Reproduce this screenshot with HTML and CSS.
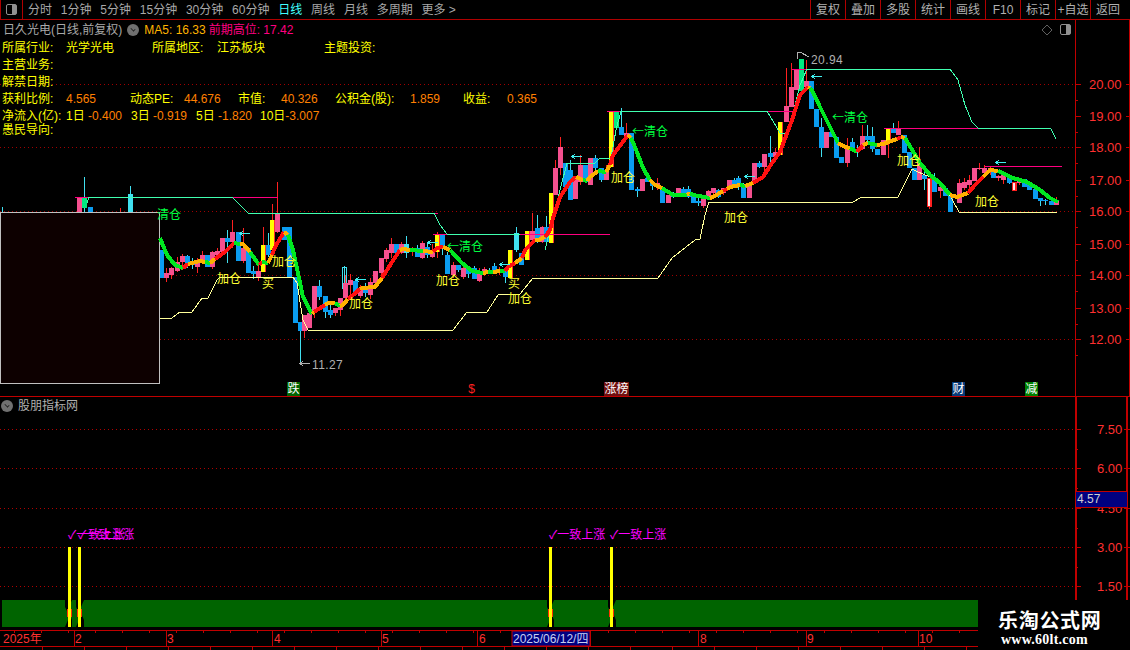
FILE: index.html
```html
<!DOCTYPE html>
<html lang="zh-CN">
<head>
<meta charset="utf-8">
<title>日久光电</title>
<link rel="stylesheet" href="styles.css">
</head>
<body>
<div class="app">
  <header class="topbar">
    <div class="corner"><span class="panel-icon"></span></div>
    <nav class="tabs">
      <span>分时</span><span>1分钟</span><span>5分钟</span><span>15分钟</span><span>30分钟</span><span>60分钟</span>
      <span class="active">日线</span><span>周线</span><span>月线</span><span>多周期</span><span>更多 &gt;</span>
    </nav>
    <div class="tools">
      <span>复权</span><span>叠加</span><span>多股</span><span>统计</span><span>画线</span><span>F10</span><span>标记</span><span>+自选</span><span>返回</span>
    </div>
  </header>

  <section class="main-pane">
    <svg class="chart main-chart" viewBox="0 20 1130 376" width="1130" height="376">
      <g id="grid-main"></g>
      <g id="candles"></g>
      <g id="lines"></g>
      <rect class="blackbox" x="0.5" y="212.5" width="159" height="171"/>
      <g id="ma"></g>
      <g id="arrows"></g>
      <text class="lbl y" x="217" y="283">加仓</text>
      <text class="lbl y" x="272" y="266">加仓</text>
      <text class="lbl y" x="349" y="308">加仓</text>
      <text class="lbl y" x="436" y="285">加仓</text>
      <text class="lbl y" x="508" y="303">加仓</text>
      <text class="lbl y" x="611" y="182">加仓</text>
      <text class="lbl y" x="724" y="222">加仓</text>
      <text class="lbl y" x="897" y="165">加仓</text>
      <text class="lbl y" x="975" y="206">加仓</text>
      <text class="lbl y" x="262" y="288">买</text>
      <text class="lbl y" x="508" y="288">买</text>
      <text class="lbl g" x="157" y="219">清仓</text>
      <text class="lbl g" x="447" y="251">←清仓</text>
      <text class="lbl g" x="632" y="136">←清仓</text>
      <text class="lbl g" x="832" y="122">←清仓</text>
      <text class="hi" x="811" y="64">20.94</text>
      <text class="hi" x="312" y="369">11.27</text>
      <g id="axis-main"></g>
      <path class="diamond" d="M1047 25l5 5-5 5-5-5z"/>
    </svg>
    <span class="panel-icon chart-btn"></span>

    <div class="head">
      <span class="name">日久光电(日线,前复权)</span>
      <span class="round-btn"></span>
      <span class="ma5">MA5: 16.33</span>
      <span class="prev">前期高位: 17.42</span>
    </div>

    <div class="info">
      <div class="row r1"><span>所属行业:</span><span>光学光电</span><span>所属地区:</span><span>江苏板块</span><span>主题投资:</span></div>
      <div class="row">主营业务:</div>
      <div class="row">解禁日期:</div>
      <div class="row r4"><span>获利比例:</span><b>4.565</b><span>动态PE:</span><b>44.676</b><span>市值:</span><b>40.326</b><span>公积金(股):</span><b>1.859</b><span>收益:</span><b>0.365</b></div>
      <div class="row r5"><span>净流入(亿):</span><span>1日 <b>-0.400</b></span><span>3日 <b>-0.919</b></span><span>5日 <b>-1.820</b></span><span>10日<b>-3.007</b></span></div>
      <div class="row">愚民导向:</div>
    </div>

    <span class="badge b-down">跌</span>
    <span class="badge b-dollar">$</span>
    <span class="badge b-rank">涨榜</span>
    <span class="badge b-fin">财</span>
    <span class="badge b-cut">减</span>
  </section>

  <section class="sub-pane">
    <svg class="chart" viewBox="0 397 1130 233" width="1130" height="233">
      <g id="grid-sub"></g>
      <g id="vol"></g>
      <text class="sig" x="68" y="539">✓一致上涨</text>
      <text class="sig" x="78" y="539">✓一致上涨</text>
      <text class="sig" x="549" y="539">✓一致上涨</text>
      <text class="sig" x="610" y="539">✓一致上涨</text>
      <g id="axis-sub"></g>
    </svg>
    <div class="sub-title"><span class="round-btn"></span><span>股朋指标网</span></div>
    <div class="value-tag">4.57</div>
  </section>

  <footer class="datebar">
    <svg class="chart" viewBox="0 630 978 20" width="978" height="20">
      <g id="dates"></g>
      <text class="ax" x="3" y="643">2025年</text>
      <text class="ax" x="75" y="643">2</text>
      <text class="ax" x="167" y="643">3</text>
      <text class="ax" x="274" y="643">4</text>
      <text class="ax" x="382" y="643">5</text>
      <text class="ax" x="479" y="643">6</text>
      <text class="ax" x="700" y="643">8</text>
      <text class="ax" x="807" y="643">9</text>
      <text class="ax" x="919" y="643">10</text>
      <rect class="datebox" x="512" y="631" width="78" height="15"/>
      <text class="datetxt" x="513" y="643">2025/06/12/四</text>
    </svg>
    <div class="watermark"><strong>乐淘公式网</strong><em>www.60lt.com</em></div>
  </footer>
</div>
<script src="chart.js"></script>
</body>
</html>
```
FILE: styles.css
```css
* { box-sizing: border-box; }
html, body { margin: 0; height: 100%; background: #000; }
body { overflow: hidden; font: 12px/14px "Liberation Sans", "Noto Sans CJK SC", sans-serif; color: #c0c0c0; }
.app { width: 1130px; height: 650px; display: flex; flex-direction: column; }

.topbar { height: 20px; display: flex; align-items: stretch; border-bottom: 1px solid #b00000; flex: none; }
.corner { width: 23px; border: 1px solid #b00000; border-width: 0 1px; display: flex; align-items: center; justify-content: center; }
.panel-icon { display: block; width: 11px; height: 11px; border: 1px solid #909090; border-radius: 2px; background: linear-gradient(90deg, #000 55%, #909090 55%); }
.tabs { display: flex; gap: 8.8px; padding-left: 5px; align-items: center; flex: 1; color: #a8a8a8; font-size: 12px; }
.tabs .active { color: #40ffff; }
.tools { display: flex; color: #b0b0b0; margin-right: 5px; }
.tools span { width: 35px; border-left: 1px solid #b00000; display: flex; align-items: center; justify-content: center; }

.main-pane { position: relative; height: 377px; border-bottom: 1px solid #c00000; flex: none; }
.sub-pane { position: relative; height: 233px; flex: none; }
.chart { display: block; }

.head { position: absolute; left: 3px; top: 2px; display: flex; align-items: center; gap: 5px; height: 15px; }
.name { color: #a8a8a8; }
.round-btn { display: block; width: 12px; height: 12px; border-radius: 50%; background: #707070; position: relative; }
.round-btn::after { content: ""; position: absolute; left: 3px; top: 3px; width: 5px; height: 3px; border: solid #111; border-width: 0 1px 1px 0; transform: rotate(45deg) scale(.7); }
.ma5 { color: #ffb400; }
.prev { color: #ff0080; margin-left: -2px; }
.chart-btn { position: absolute; left: 1060px; top: 4px; }

.info { position: absolute; left: 2px; top: 21px; color: #ffff00; }
.row { height: 17px; line-height: 15px; white-space: nowrap; display: flex; }
.row:nth-child(n+5) { height: 14px; }
.row b { font-weight: 400; color: #ff8000; }
.r1 span:nth-child(1) { width: 64px; }
.r1 span:nth-child(2) { width: 86px; }
.r1 span:nth-child(3) { width: 65px; }
.r1 span:nth-child(4) { width: 107px; }
.r4 > :nth-child(1) { width: 64px; }
.r4 > :nth-child(2) { width: 64px; }
.r4 > :nth-child(3) { width: 54px; }
.r4 > :nth-child(4) { width: 54px; }
.r4 > :nth-child(5) { width: 43px; }
.r4 > :nth-child(6) { width: 54px; }
.r4 > :nth-child(7) { width: 75px; }
.r4 > :nth-child(8) { width: 53px; }
.r4 > :nth-child(9) { width: 44px; }
.r5 > :nth-child(1) { width: 64px; }
.r5 > :nth-child(2) { width: 65px; }
.r5 > :nth-child(3) { width: 65px; }
.r5 > :nth-child(4) { width: 64px; }

.badge { position: absolute; top: 362px; height: 14px; line-height: 14px; text-align: center; color: #fff; font-size: 12px; }
.b-down { left: 287px; width: 13px; background: #006400; }
.b-dollar { left: 465px; width: 13px; color: #ff2020; }
.b-rank { left: 604px; width: 25px; background: #701010; }
.b-fin { left: 952px; width: 13px; background: #063a78; }
.b-cut { left: 1025px; width: 13px; background: #008000; }

.sub-title { position: absolute; left: 1px; top: 1px; display: flex; align-items: center; gap: 5px; color: #b0b0b0; height: 15px; }
.value-tag { position: absolute; left: 1076px; top: 94px; width: 51px; height: 17px; background: #000080; border: solid #c00000; border-width: 1px 0; color: #d0d0d0; line-height: 14px; font-size: 12px; padding-left: 1px; }

.datebar { position: relative; flex: none; height: 20px; }
.watermark { position: absolute; left: 978px; top: -30px; width: 152px; height: 50px; background: #000; color: #fff; display: flex; flex-direction: column; align-items: flex-start; padding-top: 8px; }
.watermark strong { font: 700 20px/24px "Noto Sans CJK SC", sans-serif; letter-spacing: .7px; margin-left: 20px; height: 24px; }
.watermark em { font: 700 14px/15px "Liberation Serif", serif; margin-left: 23px; letter-spacing: .25px; font-style: normal; }

.lbl { font: 12px "Noto Sans CJK SC", sans-serif; }
.lbl.y { fill: #ffff33; }
.lbl.g { fill: #00ff40; }
.hi { font: 12px "Liberation Sans", sans-serif; fill: #b0b0b0; letter-spacing: .4px; }
.sig { font: 12px "Noto Sans CJK SC", "DejaVu Sans", sans-serif; fill: #ff00ff; }
.ax { font: 12px "Liberation Sans", "Noto Sans CJK SC", sans-serif; fill: #ff3030; }
.axv { font: 13px "Liberation Sans", sans-serif; fill: #ff3030; }
.datebox { fill: #000080; stroke: #c00000; stroke-width: 1; }
.datetxt { font: 12px "Liberation Sans", "Noto Sans CJK SC", sans-serif; fill: #c8d0f0; }
.blackbox { fill: #0d0000; stroke: #c0c0c0; stroke-width: 1; }
.diamond { fill: none; stroke: #606060; }
```
FILE: chart.js
```js
const NS = 'http://www.w3.org/2000/svg';
function el(parent, name, attrs) {
  const n = document.createElementNS(NS, name);
  for (const k in attrs) n.setAttribute(k, attrs[k]);
  document.getElementById(parent).appendChild(n);
  return n;
}
const RED = '#c00000';
function rect(g, x, y, w, h, fill) { el(g, 'rect', { x, y, width: w, height: h, fill, 'shape-rendering': 'crispEdges' }); }
function line(g, x1, y1, x2, y2, stroke, extra) {
  el(g, 'line', Object.assign({ x1, y1, x2, y2, stroke, 'shape-rendering': 'crispEdges' }, extra || {}));
}
function poly(g, pts, stroke, w) {
  el(g, 'polyline', { points: pts.map(p => p.join(',')).join(' '), fill: 'none', stroke, 'stroke-width': w || 1, 'stroke-linejoin': 'round', 'shape-rendering': 'crispEdges' });
}

/* grid and axes */
[84, 147, 211, 275, 339].forEach(y => line('grid-main', 0, y + .5, 1075, y + .5, '#a00000', { 'stroke-dasharray': '1 3' }));
[429, 468, 508, 547, 586].forEach(y => line('grid-sub', 0, y + .5, 1075, y + .5, '#b00000', { 'stroke-dasharray': '1 3' }));
line('axis-main', 1075.5, 20, 1075.5, 396, RED);
line('axis-main', 1129.5, 20, 1129.5, 396, RED);
[[20, 84], [19, 116], [18, 147], [17, 180], [16, 211], [15, 244], [14, 275], [13, 308], [12, 339]].forEach(([v, y]) => {
  el('axis-main', 'text', { class: 'axv', x: 1089, y: y + 5 }).textContent = v.toFixed(2);
  line('axis-main', 1075, y + .5, 1081, y + .5, RED);
  line('axis-main', 1075, y + 16.5, 1078, y + 16.5, RED);
  line('axis-main', 1126, y + .5, 1130, y + .5, RED);
});
rect('axis-sub', 1075, 397, 2, 203, RED);
rect('axis-sub', 1126, 397, 2, 203, RED);
[['7.50', 429], ['6.00', 468], ['4.50', 508], ['3.00', 547], ['1.50', 586]].forEach(([v, y]) => {
  el('axis-sub', 'text', { class: 'axv', x: 1097, y: y + 5 }).textContent = v;
  line('axis-sub', 1075, y + .5, 1081, y + .5, RED);
  line('axis-sub', 1075, y + 20.5, 1078, y + 20.5, RED);
  line('axis-sub', 1124, y + .5, 1130, y + .5, RED);
});

/* candles: x, body top, body bottom, wick top, wick bottom, kind */
const K = {
  p: ['#f5508f', '#ff2020'], b: ['#0a9cf0', '#40e0f0'], y: ['#ffff00', '#ff2020'],
  g: ['#00e880', '#40e0f0'], c: ['#40e0f0', '#40e0f0'], h: ['#ff2020', '#ff2020'], o: ['#000', '#40e0f0'], r: ['#ff2020', '#ff2020']
};
const C = [
  [2,212,212,207,212,'c'],[79,197,212,197,212,'p'],[84,197,208,177,212,'g'],[90,207,212,207,212,'b'],[120,212,212,208,212,'r'],[130,194,212,186,212,'c'],
  [161,250,278,250,278,'b'],[166,273,278,268,282,'p'],[171,268,275,267,279,'p'],[177,262,271,257,272,'p'],[182,256,262,254,270,'p'],[187,256,263,255,268,'b'],
  [192,262,265,258,269,'b'],[197,262,267,258,273,'p'],[202,255,262,251,262,'p'],[207,255,267,255,267,'b'],[212,252,267,251,269,'p'],[217,251,255,248,257,'p'],
  [222,238,252,238,252,'p'],[227,238,242,230,263,'b'],[232,232,242,220,248,'p'],[238,232,261,232,261,'b'],[243,248,261,228,263,'p'],[248,248,273,248,273,'b'],
  [253,271,274,266,279,'b'],[258,271,277,263,281,'p'],[263,245,272,227,272,'y'],[268,245,255,233,257,'b'],[272,220,250,204,250,'y'],[277,213,232,182,233,'p'],
  [284,227,240,227,240,'b'],[289,227,277,227,277,'b'],[295,277,323,277,323,'b'],[300,322,331,322,362,'b'],[304,315,331,315,338,'p'],[309,313,328,308,328,'p'],
  [314,286,312,286,318,'p'],[319,286,297,280,300,'b'],[325,296,312,296,318,'b'],[330,310,315,305,318,'b'],[335,308,313,308,316,'p'],[340,298,310,298,316,'p'],
  [344,267,288,266,290,'o'],[345,283,298,275,300,'p'],[350,280,285,274,295,'p'],[355,281,293,280,296,'b'],[360,289,296,285,298,'p'],[365,288,293,283,297,'b'],
  [370,282,295,278,299,'p'],[375,271,283,271,287,'p'],[381,258,273,258,275,'p'],[386,250,259,248,262,'p'],[391,244,253,238,258,'p'],[396,244,253,244,258,'b'],
  [401,244,253,242,254,'p'],[406,244,253,236,258,'c'],[412,248,252,247,256,'p'],[417,248,257,245,257,'b'],[422,243,258,241,259,'p'],[427,247,255,243,258,'b'],
  [432,250,257,244,258,'p'],[437,235,252,232,258,'y'],[442,235,248,235,255,'b'],[447,255,274,252,274,'b'],[453,265,275,262,278,'p'],[458,265,270,265,272,'b'],
  [463,268,277,266,279,'p'],[468,269,274,266,278,'b'],[474,268,279,266,279,'b'],[479,273,281,268,282,'p'],[484,269,274,267,276,'p'],[489,270,273,268,274,'b'],
  [494,266,271,263,273,'b'],[499,269,273,267,275,'p'],[505,270,277,270,283,'b'],[510,250,278,250,278,'y'],[516,233,250,227,252,'c'],[521,253,265,253,265,'b'],
  [527,231,260,232,260,'y'],[532,231,240,213,241,'p'],[537,228,242,215,243,'b'],[542,227,242,226,243,'p'],[546,227,242,216,243,'b'],[551,193,243,193,243,'y'],
  [555,168,195,160,195,'p'],[560,147,168,137,175,'p'],[565,163,187,163,190,'b'],[570,170,200,160,200,'b'],[575,177,199,177,199,'p'],[580,165,182,155,185,'p'],
  [585,165,182,165,182,'b'],[590,158,185,158,185,'p'],[595,158,168,155,175,'b'],[601,168,180,168,182,'b'],[606,170,180,165,180,'p'],[611,111,167,111,167,'y'],
  [616,111,128,111,128,'g'],[621,127,135,108,135,'b'],[626,133,138,123,140,'p'],[631,133,190,133,190,'b'],[637,189,191,187,197,'b'],[642,179,191,179,191,'p'],
  [647,178,182,176,182,'b'],[652,182,186,180,190,'b'],[657,183,187,178,190,'p'],[662,187,203,187,203,'b'],[668,195,203,195,203,'p'],[673,194,197,192,198,'b'],
  [678,188,197,188,197,'p'],[683,189,193,187,193,'b'],[688,189,197,186,198,'b'],[693,193,203,193,203,'b'],[698,201,203,198,206,'b'],[703,197,206,197,208,'p'],
  [708,191,198,190,199,'p'],[713,188,193,188,196,'p'],[718,190,197,189,198,'b'],[723,188,193,188,195,'p'],[729,180,187,180,188,'p'],[734,180,188,178,188,'b'],
  [738,178,185,176,190,'b'],[743,185,198,183,198,'b'],[749,183,198,183,198,'p'],[754,163,182,163,182,'p'],[759,163,167,161,168,'b'],[764,154,167,154,172,'p'],
  [770,153,157,136,165,'b'],[775,152,157,148,160,'p'],[780,122,155,122,155,'y'],[786,106,122,68,122,'p'],[791,87,107,63,107,'p'],
  [796,69,90,69,90,'p'],[801,59,91,59,91,'g'],[806,81,87,60,90,'p'],[811,81,109,81,109,'b'],[816,109,127,109,127,'b'],[821,127,148,118,157,'b'],
  [826,132,148,132,148,'p'],[831,132,137,132,137,'b'],[836,137,158,137,158,'b'],[841,157,163,157,163,'b'],[847,147,163,138,167,'p'],[852,142,149,138,152,'b'],
  [857,149,152,145,157,'b'],[862,136,149,125,150,'p'],[867,136,140,125,142,'b'],[872,136,149,127,152,'b'],[877,149,155,149,155,'b'],[883,140,155,140,155,'p'],
  [888,129,143,129,158,'y'],[893,129,133,123,133,'b'],[898,129,135,121,135,'p'],[904,135,153,135,153,'b'],[909,152,168,152,168,'b'],[914,168,180,168,180,'b'],
  [919,163,180,147,180,'p'],[924,175,179,170,190,'b'],[929,178,207,178,209,'h'],[934,178,192,173,192,'b'],[940,187,191,187,198,'p'],[945,188,196,186,196,'b'],
  [950,196,212,196,212,'b'],[959,183,203,179,203,'p'],[964,182,188,178,190,'p'],[969,180,185,175,190,'p'],[974,168,181,168,181,'p'],[979,168,169,163,170,'p'],
  [984,168,173,165,175,'p'],[990,168,172,166,175,'p'],[993,170,178,170,178,'b'],[998,176,178,175,181,'p'],[1003,175,180,174,184,'p'],[1009,177,183,175,184,'b'],
  [1014,182,191,182,191,'h'],[1019,181,183,178,185,'p'],[1024,179,187,179,187,'b'],[1029,185,190,181,190,'b'],[1035,189,199,189,199,'b'],[1040,198,201,198,206,'b'],
  [1045,200,201,199,205,'b'],[1051,201,205,200,205,'b'],[1056,201,205,197,205,'p']
];
C.forEach(([x, t, b, wt, wb, k]) => {
  const [fill, wick] = K[k];
  line('candles', x + .5, wt, x + .5, wb, wick);
  if (k === 'o') { el('candles', 'rect', { x: x - 1.5, y: t + .5, width: 4, height: b - t, fill: 'none', stroke: wick, 'shape-rendering': 'crispEdges' }); return; }
  if (b > t) rect('candles', x - 2, t, 5, b - t, fill);
  if (k === 'y') rect('candles', x + 2, t, 1, b - t, '#ff3030');
  if (k === 'h') rect('candles', x - 1, t + 1, 2, b - t - 2, '#ffe8e8');
});

/* step lines */
const MINT = '#40ffb0', PINK = '#ff0080', PALE = '#ffff99';
[[75, 197, 89], [232, 197, 278], [273, 213, 283], [434, 213, 438], [433, 234, 447], [520, 234, 610], [607, 111, 621], [767, 111, 793], [792, 69, 806], [884, 128, 978], [985, 166, 1062]]
  .forEach(([a, y, b]) => line('lines', a, y + .5, b, y + .5, PINK));
[
  [[87, 203], [89, 197], [232, 197], [240, 205], [248, 213], [434, 213], [440, 225], [447, 234], [520, 234]],
  [[545, 250], [553, 217], [560, 190], [567, 163], [595, 163], [600, 158], [611, 158], [616, 130], [621, 111], [767, 111], [780, 133], [787, 133], [793, 113], [800, 85], [807, 69], [950, 69], [958, 80], [965, 105], [972, 122], [978, 128], [1044, 128], [1051, 129], [1056, 139]]
].forEach(p => poly('lines', p, MINT));
poly('lines', [[160, 318], [172, 318], [180, 312], [192, 312], [202, 298], [208, 298], [217, 280], [220, 277], [293, 277], [297, 283], [303, 320], [308, 330], [453, 330], [467, 312], [487, 312], [498, 295], [520, 294], [533, 278], [658, 278], [672, 258], [695, 240], [700, 239], [705, 215], [709, 202], [853, 202], [862, 197], [898, 197], [905, 183], [912, 169], [918, 172], [935, 179], [947, 190], [959, 212], [1057, 212]], PALE);

/* moving average */
const R = '#ff1010', O = '#ffb000', G = '#00e820';
[
  [G, [[160, 238], [167, 255], [175, 265], [183, 268]]],
  [R, [[183, 268], [188, 264]]],
  [O, [[188, 264], [200, 261], [205, 262]]],
  [G, [[205, 262], [210, 263]]],
  [O, [[210, 263], [215, 259]]],
  [R, [[215, 259], [225, 252], [234, 243]]],
  [G, [[234, 243], [240, 244]]],
  [O, [[240, 244], [243, 244], [250, 252]]],
  [G, [[250, 252], [259, 265]]],
  [R, [[259, 265], [262, 262]]],
  [G, [[262, 262], [268, 263]]],
  [O, [[268, 263], [272, 255]]],
  [R, [[272, 255], [275, 247], [284, 232]]],
  [O, [[284, 232], [288, 235]]],
  [G, [[288, 235], [293, 250], [303, 297], [312, 314]]],
  [O, [[312, 314], [314, 312]]],
  [R, [[314, 312], [325, 305]]],
  [O, [[325, 305], [328, 303], [335, 303]]],
  [G, [[335, 303], [340, 306]]],
  [O, [[340, 306], [343, 305], [348, 299]]],
  [R, [[348, 299], [352, 296], [360, 289]]],
  [O, [[360, 289], [362, 288], [375, 287], [382, 278]]],
  [R, [[382, 278], [392, 262], [400, 250]]],
  [O, [[400, 250], [403, 249], [410, 250]]],
  [G, [[410, 250], [423, 251]]],
  [O, [[423, 251], [433, 252]]],
  [R, [[433, 252], [437, 248], [443, 247]]],
  [O, [[443, 247], [450, 250]]],
  [G, [[450, 250], [462, 263], [472, 271], [483, 273]]],
  [O, [[483, 273], [488, 272]]],
  [G, [[488, 272], [493, 272]]],
  [O, [[493, 272], [500, 271]]],
  [G, [[500, 271], [505, 271]]],
  [R, [[505, 271], [508, 267], [515, 263]]],
  [O, [[515, 263], [522, 258]]],
  [R, [[522, 258], [525, 250], [535, 240]]],
  [O, [[535, 240], [538, 240], [545, 237]]],
  [R, [[545, 237], [550, 230], [553, 218], [560, 197], [570, 182], [576, 177]]],
  [O, [[576, 177], [583, 180]]],
  [G, [[583, 180], [587, 181]]],
  [O, [[587, 181], [590, 177], [598, 171]]],
  [G, [[598, 171], [606, 172]]],
  [O, [[606, 172], [610, 165]]],
  [R, [[610, 165], [613, 155], [628, 135]]],
  [O, [[628, 135], [631, 138]]],
  [G, [[631, 138], [635, 147], [643, 168], [650, 180]]],
  [O, [[650, 180], [655, 185], [662, 188]]],
  [G, [[662, 188], [673, 195], [687, 195]]],
  [O, [[687, 195], [690, 193]]],
  [G, [[690, 193], [693, 195], [710, 198]]],
  [O, [[710, 198], [713, 197], [723, 191]]],
  [R, [[723, 191], [727, 189]]],
  [O, [[727, 189], [730, 187], [740, 185]]],
  [G, [[740, 185], [745, 186]]],
  [O, [[745, 186], [753, 183]]],
  [R, [[753, 183], [763, 177], [772, 163], [780, 152], [792, 120], [800, 95], [808, 87]]],
  [O, [[808, 87], [810, 88]]],
  [G, [[810, 88], [813, 92], [820, 107], [830, 127], [838, 143]]],
  [O, [[838, 143], [845, 147], [850, 148]]],
  [G, [[850, 148], [857, 152]]],
  [R, [[857, 152], [863, 145]]],
  [O, [[863, 145], [868, 143]]],
  [G, [[868, 143], [877, 145]]],
  [O, [[877, 145], [883, 144], [897, 139]]],
  [R, [[897, 139], [901, 137]]],
  [O, [[901, 137], [905, 138]]],
  [G, [[905, 138], [908, 143], [920, 163], [930, 175], [940, 183], [950, 195]]],
  [O, [[950, 195], [957, 197], [968, 193]]],
  [R, [[968, 193], [975, 185], [983, 177]]],
  [O, [[983, 177], [990, 170], [998, 171]]],
  [G, [[998, 171], [1013, 178], [1027, 182], [1040, 190], [1050, 198], [1058, 202]]]
].forEach(([c, p]) => poly('ma', p, c, 4));

/* arrows */
function arrow(x, y, len, colour) {
  line('arrows', x, y + .5, x + len, y + .5, colour);
  poly('arrows', [[x + 3, y - 2], [x, y + .5], [x + 3, y + 3]], colour);
}
[[240, 233], [356, 279], [428, 242], [500, 264], [572, 156], [745, 176], [812, 76], [996, 162]].forEach(([x, y]) => arrow(x, y, 10, '#40f0f0'));
arrow(300, 363, 10, '#b0b0b0');
poly('arrows', [[797, 59], [797, 53], [800, 52], [809, 57]], '#b0b0b0');

/* sub chart: green band split by the four signals */
const GREEN = '#006400';
[[2, 65], [72, 76], [84, 547], [554, 608], [616, 978]].forEach(([a, b], i) => {
  const l = i === 0 ? 0 : 3, r = i === 4 ? 0 : 3;
  el('vol', 'polygon', {
    points: `${a},600 ${b},600 ${b},607 ${b + r},613 ${b + r},620 ${b},627 ${a},627 ${a},620 ${a - l},613 ${a - l},607`,
    fill: GREEN
  });
});
[[68, 71], [78, 81], [549, 552], [610, 613]].forEach(([a, b]) => {
  rect('vol', a - 1, 609, b - a + 2, 8, '#ff3000');
  rect('vol', a, 547, b - a, 80, '#ffff00');
});

/* date axis */
line('dates', 0, 630.5, 978, 630.5, RED);
line('dates', 0, 646.5, 978, 646.5, RED);
[74, 166, 272, 381, 477, 512, 590, 698, 806, 918].forEach(x => line('dates', x + .5, 630, x + .5, 646, RED));
for (let x = 14; x < 978; x += 27) line('dates', x + .5, 630, x + .5, 633, RED);
for (let x = 42; x < 978; x += 42) line('dates', x + .5, 646, x + .5, 650, RED);
```
